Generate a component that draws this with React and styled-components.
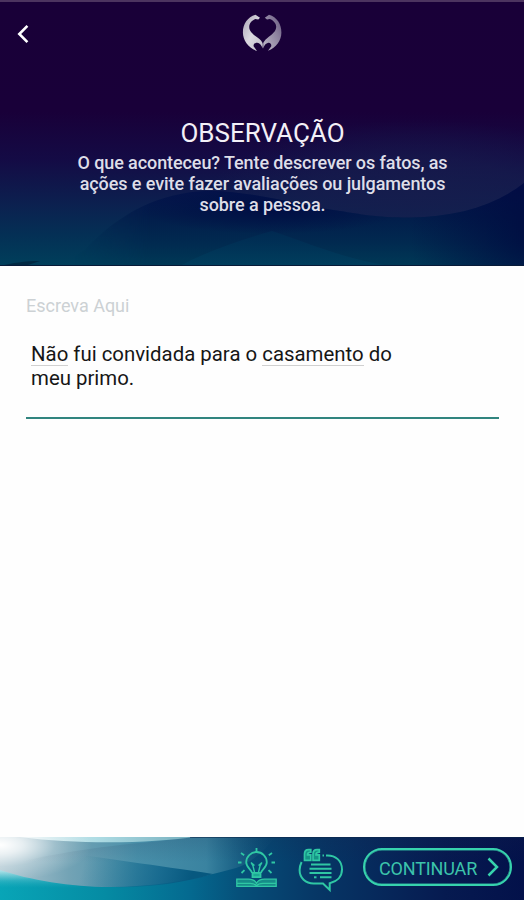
import React from "react";
import styled, { createGlobalStyle } from "styled-components";

function App() {
  return (
    <Screen>
      <GlobalStyle />
      <Header>
        <HeaderWaves />
        <TopBar>
          <BackButton aria-label="Voltar">
            <svg width="12" height="20" viewBox="0 0 12 20" fill="none">
              <path d="M10.4 1.8 2.3 10l8.1 8.2" stroke="#fff" strokeWidth="2.6" />
            </svg>
          </BackButton>
          <Logo />
        </TopBar>
        <Title>OBSERVAÇÃO</Title>
        <Description>
          O que aconteceu? Tente descrever os fatos, as
          <br />
          ações e evite fazer avaliações ou julgamentos
          <br />
          sobre a pessoa.
        </Description>
      </Header>

      <Content>
        <Label>Escreva Aqui</Label>
        <Answer>
          <Word>Não</Word> fui convidada para o <Word>casamento</Word> do
          <br />
          meu primo.
        </Answer>
      </Content>

      <Footer>
        <FooterWaves />
        <Actions>
          <IconButton aria-label="Dicas">
            <IdeaIcon />
          </IconButton>
          <IconButton aria-label="Exemplos">
            <QuoteIcon />
          </IconButton>
          <ContinueButton>
            CONTINUAR
            <svg width="12" height="20" viewBox="0 0 12 20" fill="none">
              <path d="m1.5 1.5 8.5 8.5-8.5 8.500" stroke="#37d3ad" strokeWidth="2.5" />
            </svg>
          </ContinueButton>
        </Actions>
      </Footer>
    </Screen>
  );
}

export default App;

function Logo() {
  return (
    <svg width="40" height="38" viewBox="0 0 40 38">
      <defs>
        <linearGradient id="logoLeft" x1="0" y1="0" x2="1" y2="1">
          <stop offset="0" stopColor="#aaa4b5" />
          <stop offset="0.5" stopColor="#dad8df" />
          <stop offset="1" stopColor="#bdb9c6" />
        </linearGradient>
        <linearGradient id="logoRight" x1="0" y1="1" x2="1" y2="0">
          <stop offset="0" stopColor="#c0bbc9" />
          <stop offset="0.6" stopColor="#8d829f" />
          <stop offset="1" stopColor="#66577d" />
        </linearGradient>
      </defs>
      <path
        fill="url(#logoLeft)"
        d="M13.500 .8 18 3.800 16.300 5.600 13.200 5C9.600 6.500 7.200 9.400 7.200 13 7.200 17.500 11.500 20.700 15.500 23.500 18.300 25.500 20.300 27.500 20.800 30L20.600 34.500C19.500 31.200 17.800 29 15.200 28.700 12.700 28.700 11.300 30.300 11.600 32.300L15 37C6.500 34 .9 26.500 .9 18.500 .9 10 5.500 3.200 13.500 .8Z"
      />
      <path
        fill="url(#logoRight)"
        d="M27 .8C35 3.200 39.400 10 39.400 18.500 39.400 26.500 34.200 33.800 26 36.700L29.300 32.200C29.600 30 28.200 28.500 26.300 28.700 23.800 29.200 22.200 31.200 21.300 34.500L21.200 29C22.500 26.500 24.500 24.600 26.800 22.800 30.500 19.800 34.200 17.200 34.200 12.700 34.200 9.300 31.500 6.500 27.800 5L25 5.600 22.800 3.800Z"
      />
    </svg>
  );
}

// light bulb over an open book
function IdeaIcon() {
  return (
    <svg width="42" height="40" viewBox="0 0 42 40" fill="none" stroke="#2fc7a4" strokeWidth="1.8">
      <path d="M16 25c0-3.500-5.800-5-5.800-10.700a10.300 10.300 0 0 1 20.600 0c0 5.700-5.800 7.200-5.800 10.700" />
      <path d="m15 14.500 2 3.500 1.700 7M26 14.500 24 18l-1.700 7M15 14.500l3.500 3M26 14.500l-3.500 3" strokeWidth="1.400" />
      <path fill="#1ca994" d="M16.500 24.800h8v4.400h-8z" />
      <path d="M20.500 0v4M5 5l3.200 2.200M36 5l-3.200 2.200M2 14.500h3.500M35.500 14.500H39M5.500 25l3-2.800M35.500 25l-3-2.800" />
      <path
        fill="#168d89"
        strokeWidth="1.300"
        d="M.8 31.200h11.700c4 0 6.500 1.300 8 4 1.500-2.700 4-4 8-4h11.700v7.200H.8z"
      />
      <path d="M1 35.300h13c3 0 5 .6 6.500 2.500 1.500-1.900 3.500-2.500 6.500-2.500h13" strokeWidth="1.300" />
    </svg>
  );
}

function QuoteIcon() {
  return (
    <svg width="46" height="45" viewBox="0 0 46 45" fill="none" stroke="#2fc7a4" strokeWidth="2">
      <path d="M3.600 14C2.400 16.500 1.600 19 1.600 22c0 8 6 13.500 14 13.500h9.400l6.700 6.500V35.200c7-1.500 12.300-6.200 12.300-13.700 0-9-6.500-14-14.500-14H28" />
      <path d="M24.500 7.600h1.500" />
      <path d="M13 16.500h19.500M11.500 20.800h22M11.500 25h22M22 29.300h11.500" />
      <path d="M16 29.300h2.500" />
      <path
        fill="#159486"
        strokeWidth="1.700"
        d="M12.800 1.600H10.500C8 1.600 6.500 3.500 6.500 6v6.300h6.300V6.800H9.500c0-1.800.8-2.700 3.300-2.700zM21.300 1.600H19c-2.500 0-4 1.900-4 4.400v6.300h6.300V6.800H18c0-1.800.8-2.700 3.300-2.700z"
      />
    </svg>
  );
}

function HeaderWaves() {
  return (
    <Backdrop viewBox="0 0 524 266" preserveAspectRatio="none">
      <defs>
        <linearGradient id="night" x1="0" y1="0" x2="0" y2="1">
          <stop offset="0" stopColor="#190038" />
          <stop offset="0.42" stopColor="#190039" />
          <stop offset="0.6" stopColor="#140b45" />
          <stop offset="0.78" stopColor="#0b2250" />
          <stop offset="0.88" stopColor="#042f55" />
          <stop offset="1" stopColor="#003f5b" />
        </linearGradient>
        <radialGradient id="dusk" gradientUnits="userSpaceOnUse" cx="0" cy="0" r="1" gradientTransform="translate(420 195) scale(210 75)">
          <stop offset="0" stopColor="#171d4d" stopOpacity="0.8" />
          <stop offset="0.5" stopColor="#171d4d" stopOpacity="0.6" />
          <stop offset="1" stopColor="#171d4d" stopOpacity="0" />
        </radialGradient>
        <linearGradient id="hill" gradientUnits="userSpaceOnUse" x1="0" y1="190" x2="0" y2="266">
          <stop offset="0" stopColor="#04124a" />
          <stop offset="0.35" stopColor="#021d4b" />
          <stop offset="0.7" stopColor="#012a50" />
          <stop offset="1" stopColor="#003956" />
        </linearGradient>
        <linearGradient id="reveal" gradientUnits="userSpaceOnUse" x1="75" y1="0" x2="150" y2="0">
          <stop offset="0" stopColor="#fff" stopOpacity="0" />
          <stop offset="1" stopColor="#fff" />
        </linearGradient>
        <mask id="hillMask" maskUnits="userSpaceOnUse" x="0" y="0" width="524" height="266">
          <path fill="url(#reveal)" d="M0 0h524v266H0z" />
        </mask>
        <radialGradient id="hollow" gradientUnits="userSpaceOnUse" cx="0" cy="0" r="1" gradientTransform="translate(272 210) scale(130 24)">
          <stop offset="0" stopColor="#000b42" stopOpacity="0.8" />
          <stop offset="1" stopColor="#000b42" stopOpacity="0" />
        </radialGradient>
        <linearGradient id="front" x1="0" y1="0" x2="0" y2="1">
          <stop offset="0" stopColor="#002b53" />
          <stop offset="1" stopColor="#00405f" />
        </linearGradient>
        <radialGradient id="edge" gradientUnits="userSpaceOnUse" cx="540" cy="235" r="130">
          <stop offset="0" stopColor="#00083f" stopOpacity="0.85" />
          <stop offset="1" stopColor="#00083f" stopOpacity="0" />
        </radialGradient>
        <clipPath id="ridge">
          <path d="M60 266L85 250C120 212 160 193 206 191C250 190 300 206 340 211C360 214 375 217.500 410 217.500C455 217 495 206 524 183V266z" />
        </clipPath>
      </defs>
      <path fill="url(#night)" d="M0 0h524v266H0z" />
      <path fill="url(#dusk)" d="M0 0h524v266H0z" />
      <g clipPath="url(#ridge)">
        <path fill="url(#hill)" mask="url(#hillMask)" d="M0 180h524v86H0z" />
        <path fill="url(#hollow)" d="M100 180h424v86H100z" />
        <path fill="url(#edge)" d="M380 180h144v86H380z" />
        <path fill="url(#front)" d="M180 266C205 252 240 240 272 231C300 240 340 258 390 266z" opacity="0.75" />
      </g>
      <path fill="#002943" d="M0 266c12-3 25-5 40-5l-15 5z" />
      <path fill="#4c345f" d="M0 0h524v2H0z" />
      <path fill="#081a38" d="M0 265h524v1H0z" />
    </Backdrop>
  );
}

function FooterWaves() {
  return (
    <Backdrop viewBox="0 0 524 63" preserveAspectRatio="none">
      <defs>
        <linearGradient id="sea">
          <stop offset="0" stopColor="#08a5b7" />
          <stop offset="0.2" stopColor="#058ba3" />
          <stop offset="0.36" stopColor="#046a90" />
          <stop offset="0.46" stopColor="#064f79" />
          <stop offset="0.6" stopColor="#063766" />
          <stop offset="0.85" stopColor="#061a50" />
          <stop offset="1" stopColor="#03114a" />
        </linearGradient>
        <linearGradient id="swell">
          <stop offset="0" stopColor="#b2c9d3" />
          <stop offset="0.25" stopColor="#73a3b5" />
          <stop offset="0.5" stopColor="#488fa9" />
          <stop offset="0.75" stopColor="#3a83a0" />
          <stop offset="1" stopColor="#1b557a" stopOpacity="0" />
        </linearGradient>
        <linearGradient id="deep" gradientUnits="userSpaceOnUse" x1="85" y1="20" x2="190" y2="45">
          <stop offset="0" stopColor="#106b8c" stopOpacity="0" />
          <stop offset="0.7" stopColor="#0b6189" stopOpacity="0.75" />
          <stop offset="1" stopColor="#07587f" />
        </linearGradient>
        <linearGradient id="crest">
          <stop offset="0" stopColor="#eff3f5" />
          <stop offset="0.5" stopColor="#aedce4" />
          <stop offset="1" stopColor="#74aebd" />
        </linearGradient>
        <linearGradient id="foam" gradientUnits="userSpaceOnUse" x1="0" y1="34" x2="0" y2="51">
          <stop offset="0" stopColor="#a8dfe6" stopOpacity="0.9" />
          <stop offset="1" stopColor="#2fb2c2" stopOpacity="0" />
        </linearGradient>
        <radialGradient id="glow" gradientUnits="userSpaceOnUse" cx="0" cy="0" r="1" gradientTransform="translate(0 8) scale(92 36)">
          <stop offset="0" stopColor="#fff" />
          <stop offset="0.25" stopColor="#fff" stopOpacity="0.75" />
          <stop offset="0.6" stopColor="#fff" stopOpacity="0.25" />
          <stop offset="1" stopColor="#fff" stopOpacity="0" />
        </radialGradient>
        <linearGradient id="shade" x1="0" y1="0" x2="0" y2="1">
          <stop offset="0" stopColor="#19254c" stopOpacity="0.15" />
          <stop offset="0.4" stopColor="#19254c" stopOpacity="0" />
        </linearGradient>
      </defs>
      <path fill="url(#sea)" d="M0 0h524v63H0z" />
      <path fill="url(#foam)" d="M0 30L85 51H0z" />
      <path fill="url(#swell)" d="M0 0H275C265 14 252 25 236 31C190 44 150 50 110 50C70 50 30 43 0 33z" />
      <path fill="url(#deep)" d="M60 15C110 22 175 31 213 37C180 47 145 51 110 50C95 50 75 49 60 46z" />
      <path fill="url(#crest)" d="M0 0h193C155 6 80 8 20 0z" />
      <path fill="url(#glow)" d="M0 0h100v63H0z" />
      <path fill="url(#shade)" d="M193 0h331v63H0V30C80 8 155 6 193 0z" />
      <path fill="#0b2648" opacity="0.55" d="M190 0h334v1H190z" />
    </Backdrop>
  );
}

const GlobalStyle = createGlobalStyle`
  body {
    margin: 0;
    background: #fff;
    font-family: Roboto, "Liberation Sans", sans-serif;
  }
`;

const Screen = styled.div`
  display: flex;
  flex-direction: column;
  width: 524px;
  height: 900px;
  overflow: hidden;
  background: #fefefe;
`;

const Header = styled.header`
  position: relative;
  isolation: isolate;
  box-sizing: border-box;
  height: 266px;
  color: #f3f0f7;
  text-align: center;
`;

const Backdrop = styled.svg`
  position: absolute;
  inset: 0;
  z-index: -1;
  width: 100%;
  height: 100%;
`;

const TopBar = styled.div`
  display: grid;
  grid-template-columns: 1fr 40px 1fr;
  align-items: start;
  padding: 14px 17px 0;
  height: 103px;
  box-sizing: border-box;
`;

const BackButton = styled.button`
  display: flex;
  justify-self: start;
  margin-top: 10px;
  padding: 0;
  border: 0;
  background: none;
`;

const Title = styled.h1`
  margin: 14px 0 0;
  padding-left: 1px;
  font-size: 26px;
  font-weight: 400;
  line-height: 32px;
`;

const Description = styled.p`
  margin: 3px 0 0;
  padding-left: 1px;
  font-size: 18px;
  font-weight: 500;
  line-height: 21px;
  letter-spacing: -0.09px;
  color: #dedee8;
`;

const Content = styled.main`
  flex: 1;
  padding: 30px 25px 0 26px;
`;

const Label = styled.div`
  font-size: 18px;
  line-height: 20px;
  color: #ccd1d4;
`;

const Answer = styled.div`
  padding: 26px 5px 27px;
  border-bottom: 2px solid #31857f;
  font-size: 20.4px;
  line-height: 24px;
  color: #161616;
`;

const Word = styled.span`
  background: linear-gradient(#d0d0d0, #d0d0d0) left bottom / 100% 1px no-repeat;
`;

const Footer = styled.footer`
  position: relative;
  isolation: isolate;
  height: 63px;
`;

const Actions = styled.div`
  display: flex;
  justify-content: flex-end;
  align-items: flex-start;
  padding: 11px 12px 0 0;
`;

const IconButton = styled.button`
  display: flex;
  margin-right: 20px;
  padding: 0;
  border: 0;
  background: none;

  & + & {
    margin-right: 19px;
  }
`;

const ContinueButton = styled.button`
  display: flex;
  align-items: center;
  justify-content: space-between;
  box-sizing: border-box;
  width: 149px;
  height: 38px;
  padding: 2px 11px 0 14px;
  border: 2px solid #37d3ad;
  border-radius: 19px;
  background: none;
  font-family: inherit;
  font-size: 18px;
  letter-spacing: -0.15px;
  color: #3cc4ab;
  box-shadow: inset 0 0 0 0.5px #2fae9c;

  svg {
    margin-top: -2px;
  }
`;
